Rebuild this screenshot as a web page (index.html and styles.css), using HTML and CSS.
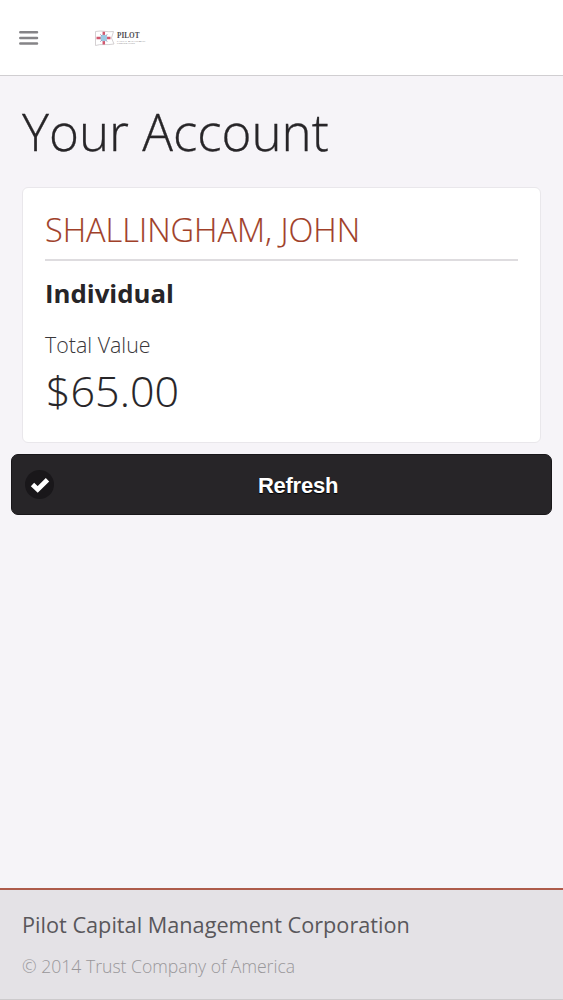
FILE: index.html
```html
<!DOCTYPE html>
<html lang="en">
<head>
<meta charset="utf-8">
<title>Your Account</title>
<link rel="stylesheet" href="styles.css">
</head>
<body>
<div class="page">
  <header class="topbar">
    <svg class="menu" width="20" height="16" viewBox="0 0 20 16"><path d="M1.300 2.200H18M1.300 8H18M1.300 13.600H18" stroke="#858487" stroke-width="2.500" stroke-linecap="round"/></svg>
    <svg class="logo" width="56" height="18" viewBox="0 0 56 18">
      <path d="M1.500 2.500C8 1 13 3.500 19.500 2.500L17.500 9L20 15C13 16.500 7 14.500 1.500 16.500Z" fill="#fff" stroke="#c9c4c7" stroke-width=".8"/>
      <path d="M9.800 2.700V15.500M2.500 9H16.500" stroke="#d25870" stroke-width="2.500"/>
      <path d="M6.500 5.500L13 12.500M13 5.500L6.500 12.500" stroke="#777da8" stroke-width="1"/>
      <circle cx="9.800" cy="9" r="3.300" fill="#9cc9e2"/>
      <text class="logo-name" x="23" y="9" textLength="22.500" lengthAdjust="spacingAndGlyphs">PILOT</text>
      <text class="logo-sub" x="23" y="12.500" textLength="28.500">CAPITAL MANAGEMENT</text>
      <text class="logo-sub" x="23" y="15.400" textLength="18">CORPORATION</text>
    </svg>
  </header>
  <main class="content">
    <h1 class="title">Your Account</h1>
    <section class="card">
      <h2 class="owner">SHALLINGHAM, JOHN</h2>
      <h3 class="kind">Individual</h3>
      <p class="label">Total Value</p>
      <p class="amount">$65.00</p>
    </section>
    <button class="refresh">
      <span class="badge"><svg width="20" height="18" viewBox="0 0 20 18"><path d="M2.500 8.500L7.700 13.500L17.500 3.700" fill="none" stroke="#fff" stroke-width="4.800"/></svg></span>
      <span class="caption">Refresh</span>
    </button>
  </main>
  <footer class="footer">
    <p class="company">Pilot Capital Management Corporation</p>
    <p class="copyright">© 2014 Trust Company of America</p>
  </footer>
</div>
</body>
</html>
```
FILE: styles.css
```css
* { box-sizing: border-box; }
body { margin: 0; background: #f6f4f8; color: #272528; font-family: "Open Sans", "Noto Sans", sans-serif; }
h1, h2, h3, p { margin: 0; }
.page { height: 1000px; display: flex; flex-direction: column; }
.topbar { height: 76px; flex: none; display: flex; align-items: center; gap: 55px; padding-left: 19px; background: #fff; border-bottom: 1px solid #d0ced1; }
.logo-name { font: bold 8.4px "Liberation Serif", serif; fill: #504e51; }
.logo-sub { font: 2.3px "Liberation Serif", serif; fill: #555256; }
.content { flex: 1; padding: 0 11px; }
.title { margin: 20px 11px 21px; height: 70px; line-height: 70px; font-size: 51.1px; font-weight: 300; white-space: nowrap; -webkit-text-stroke: .3px; }
.card { height: 256px; margin: 0 11px; padding: 20px 22px 0; background: #fff; border: 1px solid #e9e7eb; border-radius: 6px; }
.owner { height: 53px; line-height: 43px; border-bottom: 2px solid #dedcdf; font-size: 32.5px; font-weight: 300; color: #a04029; white-space: nowrap; -webkit-text-stroke: .15px; }
.kind { margin-top: 14px; line-height: 36px; font-size: 25.8px; font-weight: 700; }
.label { margin-top: 19px; line-height: 30px; font-size: 21.4px; font-weight: 300; color: #39373a; }
.amount { margin-top: 1px; padding-left: 1px; line-height: 60px; font-size: 43px; font-weight: 300; -webkit-text-stroke: .15px; }
.refresh { width: 541px; height: 61px; margin: 11px 0 0; padding: 0 0 0 13px; display: grid; grid-template-columns: 30px 1fr; align-items: center; background: #272528; border: 1px solid #19171a; border-radius: 7px; color: #fff; }
.badge { width: 29px; height: 29px; border-radius: 50%; background: #19171a; display: flex; align-items: center; justify-content: center; }
.caption { padding: 2px 10px 0 0; font: bold 22px "Liberation Sans", Arial, sans-serif; letter-spacing: -.25px; text-shadow: 0 1px 1px #000; }
.footer { height: 112px; flex: none; padding: 19px 22px 0; background: #e4e2e6; border-top: 2px solid #ad5b4b; border-bottom: 1px solid #cccacc; }
.company { line-height: 32px; font-size: 21.7px; color: #59575b; }
.copyright { margin-top: 11px; line-height: 28px; font-size: 17.6px; font-weight: 300; color: #99979a; }
```
